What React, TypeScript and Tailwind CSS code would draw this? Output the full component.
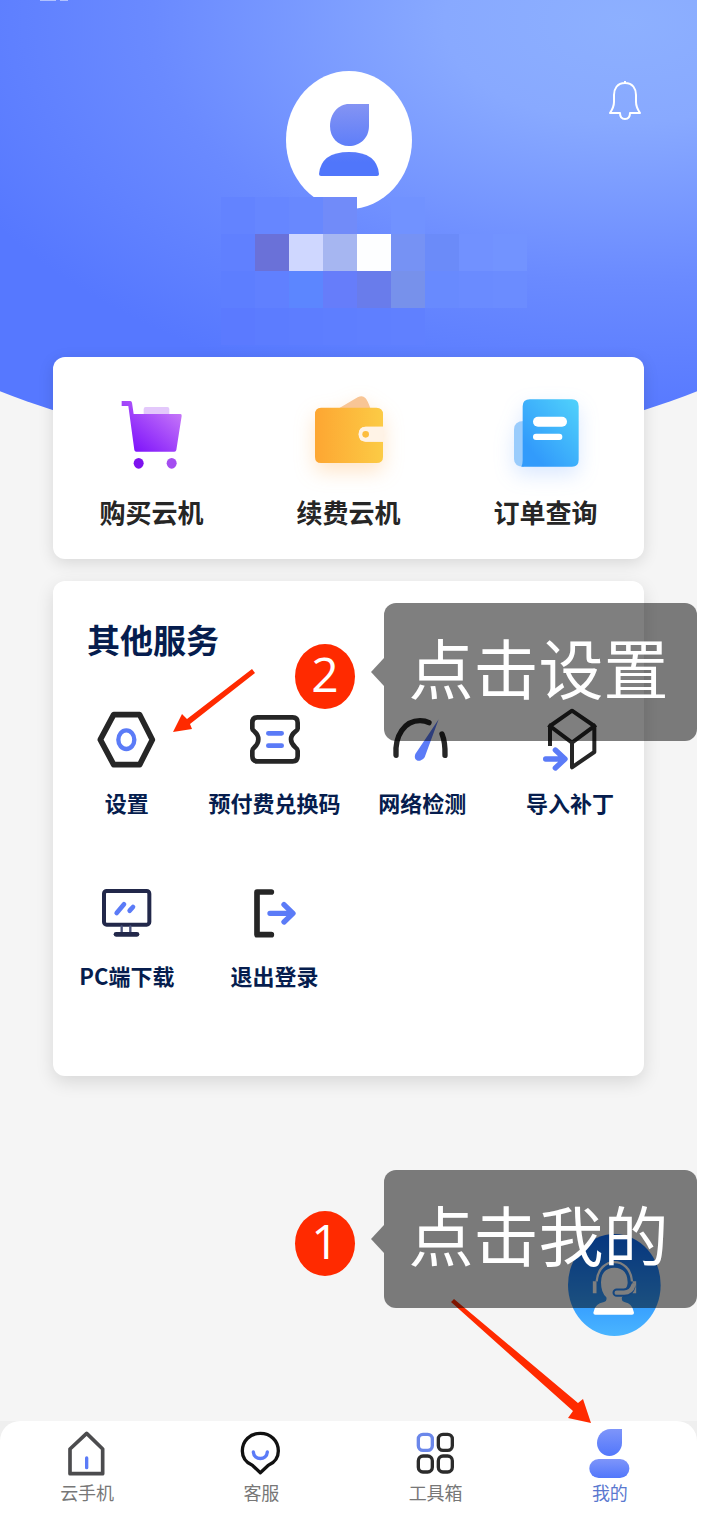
import React from 'react';

const INK = '#262626';
const BLUE = '#5b7bf7';

interface IMenuItem {
  label: string;
  icon: React.ReactNode;
}

const CartIcon = () => (
  <svg viewBox="0 0 240 240" className="size-20 overflow-visible">
    <defs>
      <linearGradient id="cart" x1="0" y1="1" x2="1" y2="0">
        <stop offset="0.1" stopColor="#7d12fb" />
        <stop offset="0.9" stopColor="#c87af8" />
      </linearGradient>
    </defs>
    <rect x="95" y="36" width="77" height="26" rx="6" fill="#e3c8fb" />
    <path
      d="M29 18H55Q59 18 60 23L65 57H205Q210 57 209 63L193 165Q192 170 187 170H73Q68 170 67 165L49 33H29Z"
      fill="url(#cart)"
    />
    <ellipse cx="80" cy="205" rx="15" ry="16" fill="#7d12ee" />
    <ellipse cx="179" cy="205" rx="15" ry="16" fill="#a44df0" />
  </svg>
);

const WalletIcon = () => (
  <svg viewBox="0 0 240 240" className="size-20 overflow-visible drop-shadow-[0_8px_10px_rgba(255,165,70,0.3)]">
    <defs>
      <linearGradient id="wallet">
        <stop offset="0" stopColor="#fda632" />
        <stop offset="1" stopColor="#fccb45" />
      </linearGradient>
    </defs>
    <path d="M90 40L146 7Q160 -1 169 9Q176 16 184 40Z" fill="#f8c595" />
    <path
      d="M36 38H202Q222 38 222 58V95H170Q149 95 149 118Q149 140 170 140H222V186Q222 204 202 204H36Q18 204 18 186V58Q18 38 36 38Z"
      fill="url(#wallet)"
    />
    <path d="M222 95H170Q149 95 149 118Q149 140 170 140H222Z" fill="#fff3e6" />
    <circle cx="170" cy="118" r="10" fill="#fcbd3f" />
  </svg>
);

const OrderIcon = () => (
  <svg viewBox="0 0 240 240" className="size-20 overflow-visible drop-shadow-[0_8px_10px_rgba(70,140,255,0.2)]">
    <defs>
      <linearGradient id="order" x1="0" y1="1" x2="1" y2="0">
        <stop offset="0.2" stopColor="#329bfb" />
        <stop offset="1" stopColor="#50d2fb" />
      </linearGradient>
    </defs>
    <path d="M54 78Q24 78 24 104V192Q24 215 54 215Z" fill="#9accfc" />
    <path d="M72 13H198Q218 13 218 34V194Q218 215 198 215H46Q50 208 50 196V34Q50 13 72 13Z" fill="url(#order)" />
    <rect x="81" y="65" width="102" height="30" rx="15" fill="#fff" />
    <rect x="81" y="116" width="88" height="19" rx="9" fill="#fff" />
  </svg>
);

const LineIcon = ({ children }: { children: React.ReactNode }) => (
  <svg
    viewBox="0 0 180 180"
    className="size-[60px] overflow-visible"
    fill="none"
    stroke={INK}
    strokeWidth="14"
    strokeLinecap="round"
    strokeLinejoin="round"
  >
    {children}
  </svg>
);

const TabIcon = ({ children }: { children: React.ReactNode }) => (
  <svg
    viewBox="0 0 144 147"
    className="h-[49px] w-12 overflow-visible"
    fill="none"
    strokeWidth="10"
    strokeLinecap="round"
    strokeLinejoin="round"
  >
    {children}
  </svg>
);

const shortcuts: IMenuItem[] = [
  { label: '购买云机', icon: <CartIcon /> },
  { label: '续费云机', icon: <WalletIcon /> },
  { label: '订单查询', icon: <OrderIcon /> },
];

const services: IMenuItem[] = [
  {
    label: '设置',
    icon: (
      <LineIcon>
        <path d="M10 89L50 14H128L166 89L128 164H50Z" strokeWidth="17" />
        <ellipse cx="88" cy="89" rx="24" ry="28" stroke={BLUE} strokeWidth="13" />
      </LineIcon>
    ),
  },
  {
    label: '预付费兑换码',
    icon: (
      <LineIcon>
        <path d="M37 22H143Q158 22 158 38V56C158 64 138 66 138 88S158 112 158 122V138Q158 154 143 154H37Q22 154 22 138V122C22 112 40 110 40 88S22 64 22 56V38Q22 22 37 22Z" />
        <path d="M70 70H110M70 107H110" stroke={BLUE} />
      </LineIcon>
    ),
  },
  {
    label: '网络检测',
    icon: (
      <LineIcon>
        <path d="M12 136C8 76 38 32 84 32Q100 32 111 38M150 72Q160 96 159 136" strokeWidth="16" />
        <path d="M140 28L70 132C64 148 76 154 84 152Q94 150 98 142Z" fill={BLUE} stroke="none" />
      </LineIcon>
    ),
  },
  {
    label: '导入补丁',
    icon: (
      <LineIcon>
        <path d="M30 102V48L96 2L163 48V126L96 172V98M30 48L96 98L163 48" strokeWidth="12" strokeLinecap="square" />
        <path d="M17 147H70M46 120L75 147L46 174" stroke={BLUE} strokeWidth="16" />
      </LineIcon>
    ),
  },
  {
    label: 'PC端下载',
    icon: (
      <LineIcon>
        <rect x="21" y="24" width="136" height="101" rx="8" stroke="#22284a" strokeWidth="12" />
        <path d="M74 130V152M100 130V152" stroke="#4a527c" strokeWidth="7" />
        <path d="M57 154H120" stroke="#22284a" />
        <path d="M59 90L81 64M98 83L108 72" stroke={BLUE} />
      </LineIcon>
    ),
  },
  {
    label: '退出登录',
    icon: (
      <LineIcon>
        <path d="M79 27H36V155H79" strokeWidth="17" />
        <path d="M75 91H142M117 65L144 91L117 117" stroke={BLUE} strokeWidth="16" />
      </LineIcon>
    ),
  },
];

const tabs: IMenuItem[] = [
  {
    label: '云手机',
    icon: (
      <TabIcon>
        <path d="M71 13L119 60V134H21V60Z" stroke="#4c4c4e" strokeWidth="11" />
        <path d="M71 87V116" stroke={BLUE} />
      </TabIcon>
    ),
  },
  {
    label: '客服',
    icon: (
      <TabIcon>
        <path d="M70 131L46 109C26 100 16 84 16 66C16 34 40 13 70 13S124 34 124 66C124 84 114 100 94 109Z" stroke="#111" />
        <path d="M49 69C51 95 89 95 91 69" stroke={BLUE} />
      </TabIcon>
    ),
  },
  {
    label: '工具箱',
    icon: (
      <TabIcon>
        <rect x="19" y="16" width="42" height="48" rx="14" stroke="#6b87ea" />
        <rect x="79" y="16" width="42" height="48" rx="14" stroke="#2b2b2b" />
        <rect x="19" y="81" width="42" height="48" rx="14" stroke="#2b2b2b" />
        <rect x="79" y="81" width="42" height="48" rx="14" stroke="#2b2b2b" />
      </TabIcon>
    ),
  },
  {
    label: '我的',
    icon: (
      <TabIcon>
        <defs>
          <linearGradient id="me" x1="0" y1="0" x2="0" y2="1">
            <stop offset="0" stopColor="#7e95fa" />
            <stop offset="1" stopColor="#5277fb" />
          </linearGradient>
        </defs>
        <path d="M74 0H108V42C108 64 90 81 70 81S33 64 33 42S50 0 74 0Z" fill="url(#me)" />
        <rect x="10" y="90" width="120" height="57" rx="28" fill="url(#me)" />
      </TabIcon>
    ),
  },
];

// Censored user name, row by row
const mosaic = [
  '#6383ff', '#6686ff', '#6888fe', '#718bf9', 'transparent', '#7192ff', 'transparent', 'transparent', 'transparent',
  '#6080ff', '#6a71d8', '#cfd7ff', '#a6b6f1', '#fdfeff', '#7692f4', '#6b8bf9', '#7191ff', '#7293ff',
  '#5d7eff', '#6080ff', '#5c86ff', '#667dfa', '#697ceb', '#7791eb', '#688afe', '#6a8bff', '#6b8cff',
  '#5b7aff', '#5c7cff', '#5d7dff', '#5e7eff', '#5f7fff', '#6080ff', 'transparent', 'transparent', 'transparent',
];

const Callout = ({ step, children }: { step: number; children: React.ReactNode }) => (
  <div className="flex items-center">
    <span className="mt-2 flex h-[65px] w-[60px] items-center justify-center rounded-[50%] bg-[#ff2a00] pb-1 font-['Open_Sans',sans-serif] text-[48px] leading-none text-white">
      {step}
    </span>
    <span className="ml-4 h-7 w-[13px] bg-black/50 [clip-path:polygon(0_50%,100%_0,100%_100%)]" />
    <p className="flex h-[138px] w-[313px] items-center justify-center rounded-[12px] bg-black/50 pr-1 pb-3 text-[65px] leading-none whitespace-nowrap text-white">
      {children}
    </p>
  </div>
);

const App = () => {
  return (
    <div className="bg-white pr-1 font-['Noto_Sans_CJK_SC',sans-serif]">
      <div className="relative flex flex-col bg-[#f5f5f5]">
        <div className="absolute inset-x-0 top-0 h-[455px] bg-[radial-gradient(ellipse_105%_88%_at_90%_5%,#8db0ff_0%,#88a9ff_25%,#6a8aff_65%,#5678ff_100%)] [clip-path:ellipse(98%_100%_at_50%_0)]" />
        <div className="absolute top-0 left-10 flex gap-1">
          <span className="h-px w-4 bg-white/50" />
          <span className="h-px w-2 bg-white/50" />
        </div>

        <header className="relative flex flex-col items-center pt-[71px]">
          <div className="flex h-[138px] w-[126px] justify-center rounded-[50%] bg-white pt-8">
            <svg viewBox="0 0 62 74" className="h-[74px] w-[62px]">
              <defs>
                <linearGradient id="avatar" gradientUnits="userSpaceOnUse" x1="0" y1="0" x2="0" y2="74">
                  <stop offset="0" stopColor="#8594f3" />
                  <stop offset="0.8" stopColor="#5076fb" />
                </linearGradient>
              </defs>
              <path d="M31 1H51V23C51 35 42 43 31 43S12 35 12 23S20 1 31 1Z" fill="url(#avatar)" />
              <path d="M1 71Q3 49 31 49T61 71Q61 73 59 73H3Q1 73 1 71Z" fill="url(#avatar)" />
            </svg>
          </div>
          <button aria-label="消息" className="absolute top-[80px] right-14">
            <svg viewBox="0 0 32 41" className="h-[41px] w-8" fill="none" stroke="#fff" strokeWidth="2" strokeLinejoin="round">
              <path d="M16 1V3M16 3C8 3 5 9 5 15V22Q5 27 1 33H11Q11 39 16 39T21 33H31Q27 27 27 22V15C27 9 24 3 16 3Z" />
            </svg>
          </button>
          <div className="-mt-3 pl-[50px]">
            <div className="grid w-[306px] grid-cols-9">
              {mosaic.map((color, i) => (
                <span key={i} className="h-[37px]" style={{ backgroundColor: color }} />
              ))}
            </div>
          </div>
        </header>

        <main className="relative flex flex-col gap-[22px] px-[53px] pt-3 pb-[345px]">
          <section className="grid grid-cols-3 rounded-[12px] bg-white pt-[38px] pb-7 shadow-[0_4px_16px_rgba(0,0,0,0.12)]">
            {shortcuts.map((item) => (
              <button key={item.label} className="flex flex-col items-center gap-[18px] text-[26px] leading-[38px] font-bold text-[#262626]">
                {item.icon}
                {item.label}
              </button>
            ))}
          </section>

          <section className="rounded-[12px] bg-white pt-[34px] pb-[85px] shadow-[0_6px_18px_rgba(0,0,0,0.12)]">
            <h2 className="pl-[34px] text-[33px] leading-[48px] font-bold text-[#061d4e]">其他服务</h2>
            <div className="mt-[47px] grid grid-cols-4 gap-y-[65px]">
              {services.map((item) => (
                <button
                  key={item.label}
                  className="flex flex-col items-center gap-4 text-[22px] leading-8 font-bold whitespace-nowrap text-[#061d4e]"
                >
                  {item.icon}
                  {item.label}
                </button>
              ))}
            </div>
          </section>
        </main>

        <nav className="relative bg-[#efefef]">
          <div className="grid grid-cols-4 rounded-t-[20px] bg-white pt-2 pb-[10px]">
            {tabs.map((tab) => (
              <a
                key={tab.label}
                href="#"
                className={`flex flex-col items-center text-[18px] leading-7 ${tab.label === '我的' ? 'text-[#5a78cf]' : 'text-[#777777]'}`}
              >
                {tab.icon}
                {tab.label}
              </a>
            ))}
          </div>
        </nav>

        <button aria-label="在线客服" className="absolute right-9 bottom-[180px]">
          <svg viewBox="0 0 279 306" className="h-[102px] w-[93px]">
            <defs>
              <linearGradient id="support" x1="0" y1="0" x2="0" y2="1">
                <stop offset="0" stopColor="#0b6dff" />
                <stop offset="1" stopColor="#4ab5ff" />
              </linearGradient>
            </defs>
            <ellipse cx="139" cy="153" rx="139" ry="153" fill="url(#support)" />
            <path
              d="M76 236Q80 208 108 204Q118 202 115 190Q99 176 99 145Q100 102 139 101Q178 102 179 145Q179 176 162 190Q159 202 169 204Q194 208 198 236Q198 242 192 242H82Q76 242 76 236Z"
              fill="#fff"
            />
            <path d="M86 142C92 65 186 65 192 142" fill="none" stroke="#fff" strokeWidth="7" />
            <path d="M80 142V178M199 142V178" fill="none" stroke="#fff" strokeWidth="11" />
            <path d="M190 158Q186 175 168 176H146" fill="none" stroke="#2b8cff" strokeWidth="25" strokeLinecap="round" />
            <path d="M196 154Q190 175 168 176H146" fill="none" stroke="#fff" strokeWidth="13" strokeLinecap="round" />
          </svg>
        </button>

        <svg viewBox="0 0 82 64" className="absolute top-[669px] left-[173px] h-16 w-[82px]" fill="#ff2a00">
          <path d="M0 63L9 45L14 50L79 0L82 4L17 55L19 60Z" />
        </svg>
        <svg viewBox="0 0 142 126" className="absolute right-[105px] bottom-[91px] h-[126px] w-[142px]" fill="#ff2a00">
          <path d="M1 3L4 0L128 104L133 100L141 124L118 119L123 112Z" />
        </svg>

        <div className="absolute top-[603px] right-0">
          <Callout step={2}>点击设置</Callout>
        </div>
        <div className="absolute right-0 bottom-[208px]">
          <Callout step={1}>点击我的</Callout>
        </div>
      </div>
    </div>
  );
};

export default App;
